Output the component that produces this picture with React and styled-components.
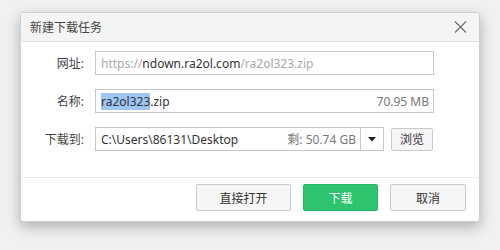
import React from "react";
import styled, { createGlobalStyle } from "styled-components";

const Global = createGlobalStyle`
  html, body { margin: 0; padding: 0; background: #f1f1f1; }
  body { font-family: "Noto Sans", "Noto Sans CJK SC", sans-serif; font-size: 12px; color: #333; }
  * { box-sizing: border-box; }
`;

const Page = styled.div`
  width: 500px;
  height: 250px;
  padding: 12px 20px 0 20px;
`;

const Dialog = styled.div`
  width: 460px;
  height: 210px;
  background: #fff;
  border: 1px solid #cfcfcf;
  border-radius: 3px;
  box-shadow: 0 5px 14px rgba(0, 0, 0, 0.28);
  display: flex;
  flex-direction: column;
  overflow: hidden;
`;

const Header = styled.div`
  height: 29px;
  flex: none;
  background: #f4f4f4;
  border-bottom: 1px solid #e4e4e4;
  display: flex;
  align-items: center;
  justify-content: space-between;
  padding: 0 12px 0 9px;
`;

const Title = styled.span`
  font-size: 12px;
  color: #444;
`;

const Close = styled.button`
  border: 0;
  background: none;
  padding: 0;
  width: 14px;
  height: 14px;
  display: flex;
  align-items: center;
  justify-content: center;
`;

const Body = styled.div`
  flex: 1;
  padding: 9px 0 0 0;
  display: flex;
  flex-direction: column;
  gap: 14px;
  border-bottom: 1px solid #ececec;
`;

const Row = styled.div`
  display: flex;
  align-items: center;
  height: 24px;
  margin-bottom: ${(p) => p.$mb || 0}px;
`;

const Label = styled.span`
  width: 63px;
  text-align: right;
  margin-right: 11px;
  color: #444;
  flex: none;
`;

const Field = styled.div`
  width: ${(p) => p.$w}px;
  height: 24px;
  border: 1px solid #c6c6c6;
  display: flex;
  align-items: center;
  padding: 0 4px 0 5px;
  white-space: nowrap;
  overflow: hidden;
  color: #333;
`;

const Dim = styled.span`
  color: #aaa;
`;

const Sel = styled.span`
  background: #9fc5f3;
`;

const Right = styled.span`
  margin-left: auto;
  color: #777;
`;

const Drop = styled.div`
  width: 23px;
  height: 24px;
  border: 1px solid #c6c6c6;
  border-left: 0;
  display: flex;
  align-items: center;
  justify-content: center;
`;

const Small = styled.button`
  margin-left: 7px;
  width: 42px;
  height: 23px;
  border: 1px solid #cacaca;
  border-radius: 2px;
  background: #f5f5f5;
  font: inherit;
  color: #333;
  padding: 0;
`;

const Footer = styled.div`
  height: 43px;
  flex: none;
  display: flex;
  justify-content: flex-end;
  align-items: flex-start;
  padding: 6px 13px 0 0;
  gap: 12px;
`;

const Btn = styled.button`
  width: ${(p) => p.$w}px;
  height: 27px;
  border-radius: 2px;
  font: inherit;
  font-size: 12px;
  padding: 0;
  border: 1px solid ${(p) => (p.$primary ? "#27b562" : "#cacaca")};
  background: ${(p) => (p.$primary ? "#2ec46d" : "#f6f6f6")};
  color: ${(p) => (p.$primary ? "#fff" : "#333")};
`;

export default function App() {
  return (
    <Page>
      <Global />
      <Dialog>
        <Header>
          <Title>新建下载任务</Title>
          <Close>
            <svg width="13" height="12" viewBox="0 0 13 12">
              <path d="M1 0.5 L12 11.5 M12 0.5 L1 11.5" stroke="#6a6a6a" strokeWidth="1.1" fill="none" />
            </svg>
          </Close>
        </Header>
        <Body>
          <Row>
            <Label>网址:</Label>
            <Field $w={339}>
              <Dim>https://</Dim>ndown.ra2ol.com<Dim>/ra2ol323.zip</Dim>
            </Field>
          </Row>
          <Row>
            <Label>名称:</Label>
            <Field $w={339}>
              <Sel>ra2ol323</Sel>.zip
              <Right>70.95 MB</Right>
            </Field>
          </Row>
          <Row $mb={1}>
            <Label>下载到:</Label>
            <Field $w={266}>
              C:\Users\86131\Desktop
              <Right>剩: 50.74 GB</Right>
            </Field>
            <Drop>
              <svg width="8" height="5" viewBox="0 0 8 5">
                <path d="M0 0 H8 L4 4.5 Z" fill="#222" />
              </svg>
            </Drop>
            <Small>浏览</Small>
          </Row>
        </Body>
        <Footer>
          <Btn $w={95}>直接打开</Btn>
          <Btn $w={75} $primary>下载</Btn>
          <Btn $w={76}>取消</Btn>
        </Footer>
      </Dialog>
    </Page>
  );
}
